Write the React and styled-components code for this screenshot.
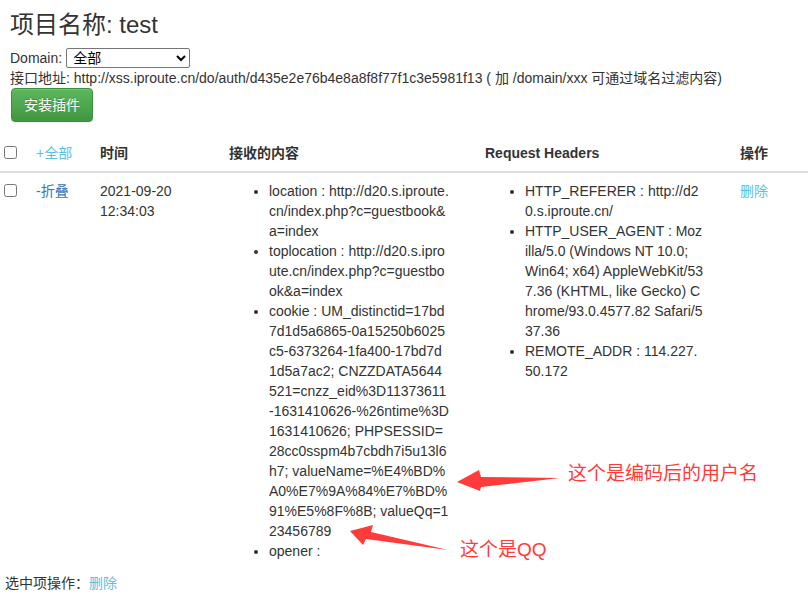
import React from "react";
import styled, { createGlobalStyle } from "styled-components";

const GlobalStyle = createGlobalStyle`
  body {
    margin: 0;
    background: #fff;
    color: #333;
    font-family: "Liberation Sans", Arial, "Noto Sans CJK SC", sans-serif;
    font-size: 14px;
    line-height: 20px;
  }
`;

const content = [
  "location : http://d20.s.iproute.cn/index.php?c=guestbook&a=index",
  "toplocation : http://d20.s.iproute.cn/index.php?c=guestbook&a=index",
  "cookie : UM_distinctid=17bd7d1d5a6865-0a15250b6025c5-6373264-1fa400-17bd7d1d5a7ac2; CNZZDATA5644521=cnzz_eid%3D11373611-1631410626-%26ntime%3D1631410626; PHPSESSID=28cc0sspm4b7cbdh7i5u13l6h7; valueName=%E4%BD%A0%E7%9A%84%E7%BD%91%E5%8F%8B; valueQq=123456789",
  "opener : ",
];

const headers = [
  "HTTP_REFERER : http://d20.s.iproute.cn/",
  "HTTP_USER_AGENT : Mozilla/5.0 (Windows NT 10.0; Win64; x64) AppleWebKit/537.36 (KHTML, like Gecko) Chrome/93.0.4577.82 Safari/537.36",
  "REMOTE_ADDR : 114.227.50.172",
];

const App = () => {
  return (
    <Page>
      <GlobalStyle />
      <Top>
        <Title>项目名称: test</Title>
        <FormRow>
          Domain:
          <Select defaultValue="all">
            <option value="all">全部</option>
          </Select>
        </FormRow>
        <div>
          接口地址: http://xss.iproute.cn/do/auth/d435e2e76b4e8a8f8f77f1c3e5981f13 ( 加
          /domain/xxx 可通过域名过滤内容)
        </div>
        <GreenButton>安装插件</GreenButton>
      </Top>

      <Table>
        <colgroup>
          <col style={{ width: 28 }} />
          <col style={{ width: 64 }} />
          <col style={{ width: 129 }} />
          <col style={{ width: 256 }} />
          <col style={{ width: 255 }} />
          <col />
        </colgroup>
        <thead>
          <tr>
            <Th $check>
              <input type="checkbox" />
            </Th>
            <Th>
              <Link $light>+全部</Link>
            </Th>
            <Th>时间</Th>
            <Th>接收的内容</Th>
            <Th>Request Headers</Th>
            <Th>操作</Th>
          </tr>
        </thead>
        <tbody>
          <tr>
            <Td $check>
              <input type="checkbox" />
            </Td>
            <Td>
              <Link>-折叠</Link>
            </Td>
            <Td>
              2021-09-20
              <br />
              12:34:03
            </Td>
            <Td>
              <DataList>
                {content.map((c) => (
                  <li key={c}>{c}</li>
                ))}
              </DataList>
            </Td>
            <Td>
              <DataList>
                {headers.map((h) => (
                  <li key={h}>{h}</li>
                ))}
              </DataList>
            </Td>
            <Td>
              <Link $light>删除</Link>
            </Td>
          </tr>
        </tbody>
      </Table>

      <Footer>
        选中项操作：<Link $light>删除</Link>
      </Footer>

      {/* red annotations drawn over the screenshot */}
      <Arrow width="808" height="598" viewBox="0 0 808 598">
        <polygon points="457,482 479,470 481,477 560,478 481,487 480,491" />
        <polygon points="350,531 373,525 371,532 448,550 366,539 363,545" />
      </Arrow>
      <Note $x={568} $y={461}>这个是编码后的用户名</Note>
      <Note $x={460} $y={537}>这个是QQ</Note>
    </Page>
  );
};

const Page = styled.div`
  position: relative;
  display: flow-root;
  width: 808px;
  min-height: 598px;
`;

const Top = styled.div`
  padding: 0 10px;
`;

const Title = styled.h3`
  margin: 12px 0 10px;
  font-size: 24px;
  font-weight: 400;
  line-height: 1.1;
`;

const FormRow = styled.div`
  display: flex;
  align-items: center;
  gap: 4px;
  height: 20px;
`;

const Select = styled.select`
  width: 124px;
  height: 20px;
  font-family: inherit;
  font-size: 14px;
  color: #000;
  border: 1px solid #767676;
  border-radius: 2px;
  background: #fff;
  padding: 0 2px;
`;

const GreenButton = styled.button`
  display: block;
  height: 34px;
  padding: 6px 12px;
  margin-left: 1px;
  font-family: inherit;
  font-size: 14px;
  line-height: 20px;
  color: #fff;
  border: 1px solid #3e8f3e;
  border-radius: 4px;
  background-image: linear-gradient(to bottom, #5cb85c 0, #419641 100%);
  text-shadow: 0 -1px 0 rgba(0, 0, 0, 0.2);
  box-shadow: inset 0 1px 0 rgba(255, 255, 255, 0.15), 0 1px 1px rgba(0, 0, 0, 0.075);
`;

const Table = styled.table`
  width: 100%;
  margin-top: 13px;
  border-collapse: collapse;
  border-spacing: 0;
  table-layout: fixed;
`;

const Th = styled.th`
  padding: ${(p) => (p.$check ? "8px 0" : "8px")};
  text-align: left;
  vertical-align: bottom;
  font-weight: bold;
  border-bottom: 2px solid #ddd;
  input {
    margin: 3px 3px 0 4px;
    vertical-align: top;
  }
  a {
    font-weight: normal;
  }
`;

const Td = styled.td`
  padding: ${(p) => (p.$check ? "8px 0" : "8px")};
  vertical-align: top;
  input {
    margin: 3px 3px 3px 4px;
    vertical-align: top;
  }
`;

const Link = styled.a`
  color: ${(p) => (p.$light ? "#5bc0de" : "#337ab7")};
  text-decoration: none;
  cursor: pointer;
`;

const DataList = styled.ul`
  margin: 0;
  padding-left: 40px;
  li {
    width: 180px;
    word-break: break-all;
  }
`;

const Footer = styled.div`
  margin-top: 4px;
  padding-left: 5px;
`;

const Arrow = styled.svg`
  position: absolute;
  left: 0;
  top: 0;
  pointer-events: none;
  polygon {
    fill: #ff3b3b;
  }
`;

const Note = styled.div`
  position: absolute;
  left: ${(p) => p.$x}px;
  top: ${(p) => p.$y}px;
  color: #ff3b3b;
  font-size: 19px;
  line-height: 26px;
  white-space: nowrap;
`;

export default App;
